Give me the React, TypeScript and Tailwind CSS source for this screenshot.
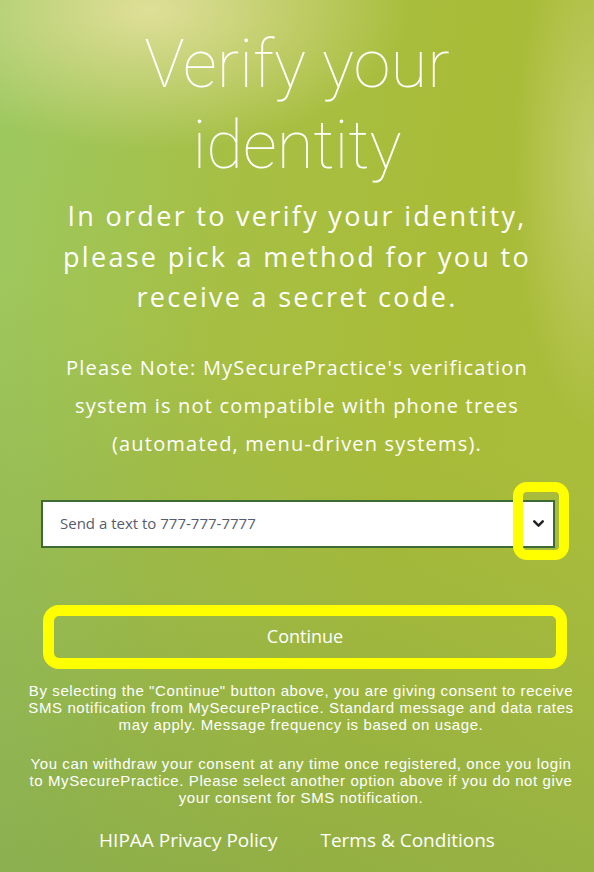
import { ChevronDown } from 'lucide-react'

const body = { fontFamily: '"Open Sans", "Liberation Sans", sans-serif' }
const small = { fontFamily: '"Liberation Sans", Arial, sans-serif' }

export default function App() {
  return (
    <div
      className="relative w-[594px] h-[872px] overflow-hidden flex flex-col items-center text-white text-center"
      style={{
        ...body,
        background:
          'radial-gradient(ellipse 260px 140px at 150px 10px, rgba(230,226,160,0.9), rgba(230,226,160,0) 100%), radial-gradient(ellipse 80px 260px at 594px 170px, rgba(200,210,120,0.8), rgba(200,210,120,0) 100%), linear-gradient(100deg, #9cc962 0%, #a6bf44 35%, #a9bc38 65%, #aabd3c 100%)',
      }}
    >
      {/* lower-left darker tint */}
      <div className="absolute inset-0 pointer-events-none bg-[linear-gradient(20deg,rgba(120,160,80,0.55)_0%,rgba(120,160,80,0)_55%)]" />

      <div className="relative flex flex-col items-center w-full">
        <h1
          className="pt-[24px] text-[67px] leading-[81px] font-thin"
          style={{ fontFamily: 'Roboto, "Open Sans", sans-serif' }}
        >
          Verify your
          <br />
          identity
        </h1>

        <p className="mt-[10px] text-[27px] leading-[40.5px] tracking-[2.3px]">
          In order to verify your identity,
          <br />
          please pick a method for you to
          <br />
          receive a secret code.
        </p>

        <p className="mt-[31px] text-[20px] leading-[38px] tracking-[1.2px]">
          Please Note: MySecurePractice's verification
          <br />
          system is not compatible with phone trees
          <br />
          (automated, menu-driven systems).
        </p>

        {/* method select */}
        <div className="relative mt-[37px] w-[514px] self-start ml-[41px]">
          <div className="h-[48px] bg-white border-2 border-[#3e6b34] flex items-center justify-between pl-[17px] pr-[6px]">
            <span className="text-[15px] text-[#575c6c]">Send a text to 777-777-7777</span>
            <ChevronDown size={17} strokeWidth={3.5} className="text-[#222]" />
          </div>
          {/* highlight annotation */}
          <div className="absolute left-[472px] top-[-18px] w-[56px] h-[78px] border-[10px] border-[#ffff00] rounded-[14px]" />
        </div>

        <button className="mt-[57px] self-start ml-[43px] w-[524px] h-[64px] border-[11px] border-[#ffff00] rounded-[16px] text-[18px] text-white flex items-center justify-center">
          Continue
        </button>

        <div className="mt-[13px] pl-[8px] text-[15px] leading-[17px] tracking-[0.6px]" style={small}>
          <p>
            By selecting the "Continue" button above, you are giving consent to receive
            <br />
            SMS notification from MySecurePractice. Standard message and data rates
            <br />
            may apply. Message frequency is based on usage.
          </p>
          <p className="mt-[22px]">
            You can withdraw your consent at any time once registered, once you login
            <br />
            to MySecurePractice. Please select another option above if you do not give
            <br />
            your consent for SMS notification.
          </p>
        </div>

        <div className="mt-[20px] flex gap-[43px] text-[19px]">
          <a>HIPAA Privacy Policy</a>
          <a>Terms &amp; Conditions</a>
        </div>
      </div>
    </div>
  )
}
